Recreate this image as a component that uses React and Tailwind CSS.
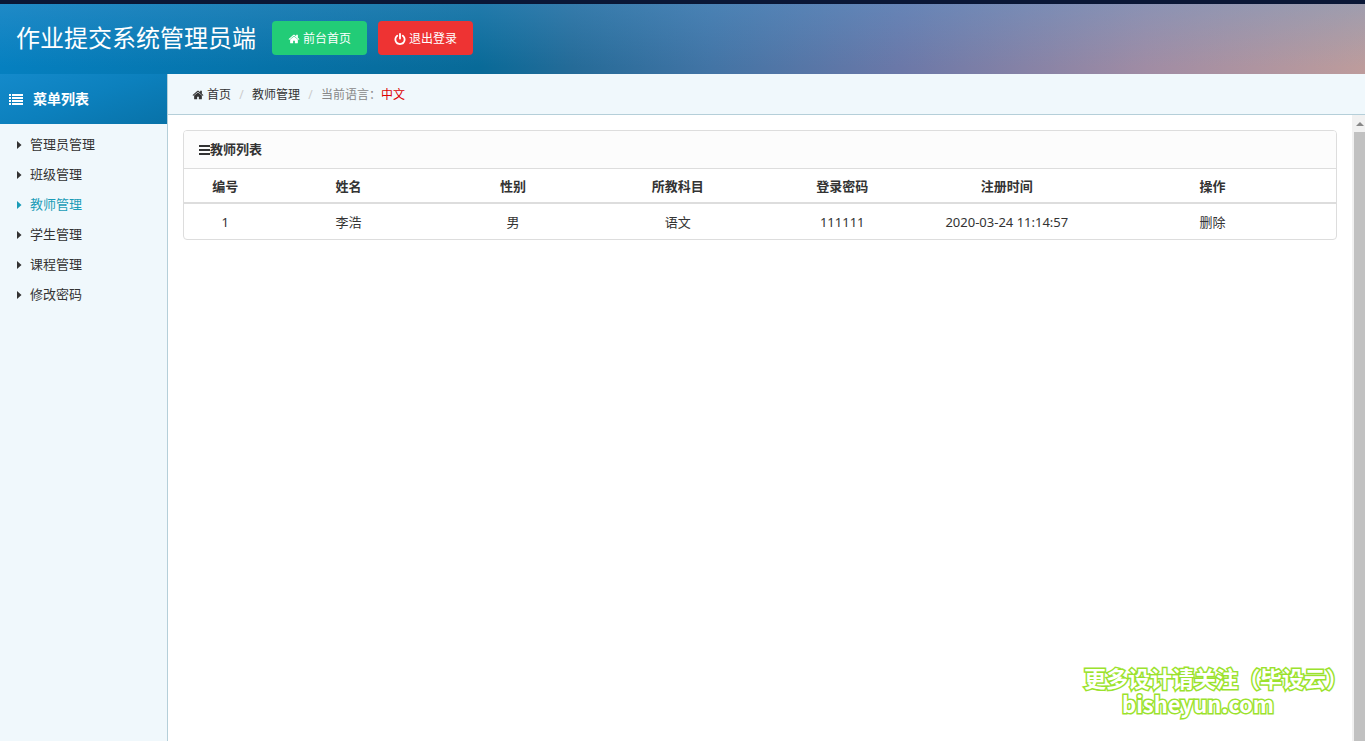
import React from 'react';

const menu = ['管理员管理', '班级管理', '教师管理', '学生管理', '课程管理', '修改密码'];

const columns = [
  { title: '编号', key: 'id', width: 'w-1/14' },
  { title: '姓名', key: 'name', width: 'w-2/14' },
  { title: '性别', key: 'gender', width: 'w-2/14' },
  { title: '所教科目', key: 'subject', width: 'w-2/14' },
  { title: '登录密码', key: 'password', width: 'w-2/14' },
  { title: '注册时间', key: 'createdAt', width: 'w-2/14' },
  { title: '操作', key: 'action', width: 'w-3/14' },
];

const teachers = [
  { id: 1, name: '李浩', gender: '男', subject: '语文', password: '111111', createdAt: '2020-03-24 11:14:57' },
];

const HomeIcon = () => (
  <svg viewBox="0 0 1792 1792" className="w-3 h-3 shrink-0" fill="currentColor" aria-hidden="true">
    <path d="M1472 992v480q0 26-19 45t-45 19h-384v-384h-256v384h-384q-26 0-45-19t-19-45v-480q0-1 .5-3t.5-3l575-474 575 474q1 2 1 6zm223-69l-62 74q-8 9-21 11h-3q-13 0-21-7l-692-577-692 577q-12 8-24 7-13-2-21-11l-62-74q-8-10-7-23.5t11-21.5l719-599q32-26 76-26t76 26l244 204v-195q0-14 9-23t23-9h192q14 0 23 9t9 23v408l219 182q10 8 11 21.5t-7 23.5z" />
  </svg>
);

const PowerIcon = () => (
  <svg viewBox="64 0 1664 1664" className="w-3 h-3 shrink-0" fill="currentColor" aria-hidden="true">
    <path d="M1664 896q0 156-61 298t-164 245-245 164-298 61-298-61-245-164-164-245-61-298q0-182 80.5-343t226.5-270q43-32 95.5-25t83.5 50q32 42 24.5 94.5t-49.5 84.5q-98 74-151.5 181t-53.5 228q0 104 40.5 198.5t109.5 163.5 163.5 109.5 198.5 40.5 198.5-40.5 163.5-109.5 109.5-163.5 40.5-198.5q0-121-53.5-228t-151.5-181q-42-32-49.5-84.5t24.5-94.5q31-43 84-50t95 25q146 109 226.5 270t80.5 343zm-640-768v640q0 52-38 90t-90 38-90-38-38-90v-640q0-52 38-90t90-38 90 38 38 90z" />
  </svg>
);

const ListIcon = () => (
  <svg viewBox="0 0 14 11" className="w-3.5 h-[11px] shrink-0" fill="currentColor" aria-hidden="true">
    <path d="M0 0h2v2H0zM3 0h11v2H3zM0 3h2v2H0zM3 3h11v2H3zM0 6h2v2H0zM3 6h11v2H3zM0 9h2v2H0zM3 9h11v2H3z" />
  </svg>
);

const BarsIcon = () => (
  <svg viewBox="0 0 12 10" className="w-3 h-2.5 shrink-0" fill="currentColor" aria-hidden="true">
    <path d="M1 0h11v2H1zM1 4h11v2H1zM1 8h11v2H1z" />
  </svg>
);

const CaretIcon = () => (
  <svg viewBox="0 0 5 8" className="w-[5px] h-2 shrink-0" fill="currentColor" aria-hidden="true">
    <path d="M0 0L4.5 4L0 8z" />
  </svg>
);

const Header = () => (
  <header className="flex items-center h-[74px] shrink-0 border-t-4 border-[#0a1736] px-4 pb-0.5 bg-[linear-gradient(to_bottom,rgba(90,160,215,0.3),rgba(90,160,215,0)_90%),linear-gradient(to_right,#0580c0_0%,#0672a8_20%,#086a98_35%,#256b98_42%,#4274a5_52%,#6b78a8_66%,#a08ca4_84%,#bd9c9c_100%)]">
    <h1 className="text-2xl leading-8 text-white">作业提交系统管理员端</h1>
    <button type="button" className="ml-4 flex items-center gap-[3px] h-[34px] px-4 pt-0.5 rounded bg-[#2c7] text-white text-[12px] leading-4">
      <HomeIcon /> 前台首页
    </button>
    <button type="button" className="ml-[11px] flex items-center gap-[3px] h-[34px] px-4 pt-0.5 rounded bg-[#e33] text-white text-[12px] leading-4">
      <PowerIcon /> 退出登录
    </button>
  </header>
);

const Sidebar = () => (
  <aside className="w-[168px] shrink-0 flex flex-col bg-[#f0f8fc] border-r border-[#b5cfd9]">
    <h2 className="flex items-center gap-2.5 h-[50px] pl-[9px] text-sm font-bold text-white bg-[linear-gradient(160deg,#148acb_0%,#0c80bd_50%,#0872a8_100%)]">
      <ListIcon /> 菜单列表
    </h2>
    <nav className="pt-1.5">
      {menu.map((item) => (
        <a
          key={item}
          href="#"
          className={`flex items-center gap-2 h-[30px] pl-[17px] text-[13px] ${item === '教师管理' ? 'text-[#1a9cb7]' : 'text-[#333]'}`}
        >
          <CaretIcon /> {item}
        </a>
      ))}
    </nav>
  </aside>
);

const Breadcrumb = () => (
  <nav className="flex items-center h-[41px] shrink-0 pl-6 pt-0.5 border-b border-[#b5cfd9] bg-[#f0f8fc] text-[12px] text-[#333]">
    <a href="#" className="flex items-center gap-[3px]"><HomeIcon /> 首页</a>
    <span className="w-[21px] text-center text-[#ccc]">/</span>
    <a href="#">教师管理</a>
    <span className="w-[21px] text-center text-[#ccc]">/</span>
    <span className="text-[#888]">当前语言：</span>
    <span className="text-[#d00]">中文</span>
  </nav>
);

const TeacherTable = () => (
  <section className="border border-[#ddd] rounded overflow-hidden">
    <h3 className="flex items-center h-[38px] px-3.5 bg-[#fcfcfc] border-b border-[#ddd] text-[13px] font-bold">
      <BarsIcon />教师列表
    </h3>
    <table className="w-full table-fixed text-center text-[13px] leading-5">
      <thead>
        <tr className="h-[34px] border-b-2 border-[#ddd]">
          {columns.map((col) => (
            <th key={col.key} className={`${col.width} font-bold`}>{col.title}</th>
          ))}
        </tr>
      </thead>
      <tbody>
        {teachers.map((row) => (
          <tr key={row.id} className="h-9">
            {columns.map((col) => (
              <td key={col.key}>
                {col.key === 'action' ? <a href="#">删除</a> : row[col.key]}
              </td>
            ))}
          </tr>
        ))}
      </tbody>
    </table>
  </section>
);

const Scrollbar = () => (
  <div className="w-[13px] shrink-0 flex flex-col bg-[#f1f1f1] pl-0.5" aria-hidden="true">
    <div className="h-[17px] flex items-center justify-center">
      <svg viewBox="0 0 8 4" className="w-2 h-1" fill="#888">
        <path d="M4 0L8 4H0z" />
      </svg>
    </div>
    <div className="flex-1 bg-[#c1c1c1]" />
  </div>
);

const App = () => {
  return (
    <div className="relative flex flex-col h-screen overflow-hidden bg-white text-[#333] font-['Noto_Sans','Noto_Sans_CJK_SC',sans-serif]">
      <Header />
      <div className="flex flex-1 min-h-0">
        <Sidebar />
        <div className="flex flex-col flex-1 min-w-0">
          <Breadcrumb />
          <div className="flex flex-1 min-h-0">
            <main className="flex-1 min-w-0 p-[15px]">
              <TeacherTable />
            </main>
            <Scrollbar />
          </div>
        </div>
      </div>

      <div className="absolute right-[17px] bottom-[25px] font-['Noto_Sans_CJK_SC',sans-serif] text-[22px] leading-[26px] font-bold text-white [-webkit-text-stroke:3px_#9be22d] [paint-order:stroke_fill]">
        <p>更多设计请关注（毕设云）</p>
        <p className="pl-[38px]">bisheyun.com</p>
      </div>
    </div>
  );
};

export default App;
